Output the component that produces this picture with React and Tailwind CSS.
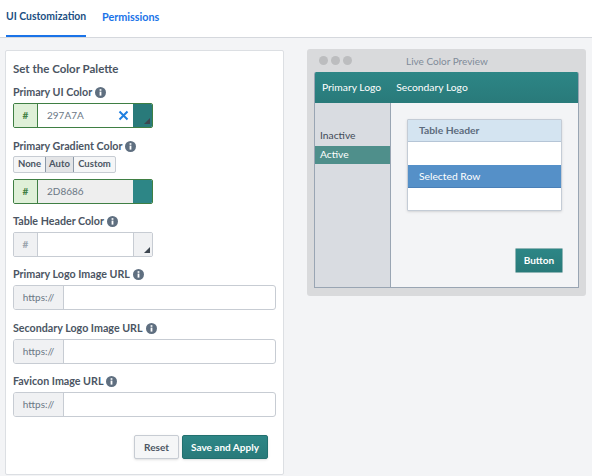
const Info = () => (
  <svg width="11" height="11" viewBox="0 0 11 11" className="shrink-0">
    <circle cx="5.5" cy="5.5" r="5.5" fill="#5f6f80" />
    <rect x="4.6" y="4.6" width="1.8" height="4" fill="#fff" />
    <rect x="4.6" y="2.2" width="1.8" height="1.6" fill="#fff" />
  </svg>
);

const Corner = () => (
  <svg width="6" height="6" viewBox="0 0 6 6" className="absolute right-[2px] bottom-[3px]">
    <path d="M6 0V6H0Z" fill="#3d4650" />
  </svg>
);

const Label = ({ children, className = "" }) => (
  <div className={`flex items-center gap-[3px] h-[14px] text-[10.7px] leading-[14px] font-bold text-[#4b5563] ${className}`}>
    {children}
    <Info />
  </div>
);

const ColorInput = ({ value, green, swatch, disabled, clear, corner, className = "" }) => (
  <div className={`flex w-[140px] h-[25px] rounded-[2px] border overflow-hidden ${green ? "border-[#3f7f43]" : "border-[#c7ccd3]"} ${className}`}>
    <div className={`w-[24px] flex items-center justify-center text-[10px] font-bold border-r ${green ? "bg-[#dff0d8] text-[#3f7f43] border-[#3f7f43]" : "bg-[#f0f1f3] text-[#9aa3ad] border-[#c7ccd3]"}`}>#</div>
    <div className={`flex-1 flex items-center justify-between pl-[9px] pr-[4px] text-[10px] text-[#6b7785] ${disabled ? "bg-[#eeeeee]" : "bg-white"}`}>
      <span>{value}</span>
      {clear && (
        <svg width="11" height="11" viewBox="0 0 11 11">
          <path d="M1.5 1.5L9.5 9.5M9.5 1.5L1.5 9.5" stroke="#1f7fe0" strokeWidth="2" />
        </svg>
      )}
    </div>
    <div className={`relative w-[19px] ${swatch ? "" : "bg-[#f0f1f3] border-l border-[#c7ccd3]"}`} style={swatch ? { background: swatch } : undefined}>
      {corner && <Corner />}
    </div>
  </div>
);

const UrlInput = ({ className = "" }) => (
  <div className={`flex w-[263px] h-[25px] rounded-[3px] border border-[#c7ccd3] overflow-hidden bg-white ${className}`}>
    <div className="w-[50px] flex items-center justify-center text-[10px] text-[#6b7785] bg-[#f0f1f3] border-r border-[#c7ccd3]">https://</div>
    <div className="flex-1" />
  </div>
);

export default function App() {
  return (
    <div className="w-[592px] h-[476px] overflow-hidden bg-[#f3f4f6] font-['Lato','Open_Sans',sans-serif]">
      <div className="h-[38px] bg-white flex pl-[6px] border-b border-[#d5d8dd]">
        <div className="w-[80px] h-[37px] border-b-2 border-[#1a73e8] text-[10.4px] font-bold text-[#1c4f82] pt-[9px] leading-[15px] whitespace-nowrap">UI Customization</div>
        <div className="ml-[16px] text-[10.8px] font-bold text-[#1a73e8] pt-[9px] leading-[15px]">Permissions</div>
      </div>
      <div className="flex items-start pl-[5px] pt-[12px] gap-[23px]">
        <div className="w-[279px] h-[425px] bg-white border border-[#dcdfe3] rounded-[2px] pl-[7px] pt-[11px]">
          <div className="h-[14px] text-[11.5px] leading-[14px] font-bold text-[#4b5563]">Set the Color Palette</div>
          <Label className="mt-[9px]">Primary UI Color</Label>
          <ColorInput className="mt-[4px]" green value="297A7A" clear corner swatch="#297a7a" />
          <Label className="mt-[11px]">Primary Gradient Color</Label>
          <div className="mt-[3px] flex w-[103px] h-[17px] rounded-[2px] border border-[#c7ccd3] text-[9.5px] font-bold text-[#4b5563] bg-[#f5f6f7] overflow-hidden">
            <div className="w-[31px] flex items-center justify-center">None</div>
            <div className="w-[29px] flex items-center justify-center bg-[#e3e4e6] border-x border-[#8c99a8]">Auto</div>
            <div className="flex-1 flex items-center justify-center">Custom</div>
          </div>
          <ColorInput className="mt-[6px]" green disabled value="2D8686" swatch="#2d8686" />
          <Label className="mt-[10px]">Table Header Color</Label>
          <ColorInput className="mt-[4px]" value="" corner />
          <Label className="mt-[10px]">Primary Logo Image URL</Label>
          <UrlInput className="mt-[4px]" />
          <Label className="mt-[11px]">Secondary Logo Image URL</Label>
          <UrlInput className="mt-[4px]" />
          <Label className="mt-[10px]">Favicon Image URL</Label>
          <UrlInput className="mt-[4px]" />
          <div className="mt-[18px] flex justify-end gap-[3px] w-[255px]">
            <div className="w-[45px] h-[24px] flex items-center justify-center rounded-[2px] border border-[#c7ccd3] bg-[#f5f6f7] shadow-sm text-[10px] font-bold text-[#4b5563]">Reset</div>
            <div className="w-[86px] h-[24px] flex items-center justify-center rounded-[2px] border border-[#22706f] bg-gradient-to-b from-[#2d8686] to-[#297a7a] shadow-sm text-[10px] font-bold text-white">Save and Apply</div>
          </div>
        </div>
        <div className="w-[279px] h-[247px] -mt-[1px] bg-[#d9dadc] rounded-[3px] px-[7px] pb-[8px] flex flex-col">
          <div className="h-[23px] relative flex items-center gap-[3px] pl-[5px] pb-[1px]">
            <span className="w-[9px] h-[9px] rounded-full bg-[#bcbdbf]" />
            <span className="w-[9px] h-[9px] rounded-full bg-[#bcbdbf]" />
            <span className="w-[9px] h-[9px] rounded-full bg-[#bcbdbf]" />
            <span className="ml-[51px] mt-[3px] text-[10px] text-[#7f8b99]">Live Color Preview</span>
          </div>
          <div className="flex-1 flex flex-col rounded-t-[2px] overflow-hidden border-x border-b border-[#99a5b3]">
            <div className="h-[31px] flex items-center gap-[15px] pl-[8px] bg-gradient-to-b from-[#2d8686] to-[#297a7a] text-[10.3px] text-white -mx-px">
              <span>Primary Logo</span>
              <span>Secondary Logo</span>
            </div>
            <div className="flex-1 flex">
              <div className="w-[76px] bg-[#d9dce1] border-r border-[#99a5b3] pt-[25px] text-[10.3px]">
                <div className="h-[18px] pl-[5px] leading-[14px] text-[#3f4a57]">Inactive</div>
                <div className="h-[18px] pl-[5px] flex items-center bg-[#4f8f8b] text-white">Active</div>
              </div>
              <div className="flex-1 bg-[#f3f4f6] pl-[16px] pt-[16px] relative">
                <div className="w-[155px] h-[92px] bg-white border border-[#c4ccd6] rounded-[1px] shadow-sm flex flex-col text-[10.3px]">
                  <div className="h-[22px] bg-[#d4e4f1] border-b border-[#b5c5d6] pl-[11px] flex items-center font-bold text-[#5c6b7d]">Table Header</div>
                  <div className="h-[23px]" />
                  <div className="h-[23px] bg-[#5590c8] border-b border-[#4a80b8] pl-[11px] pt-[1px] flex items-center text-white">Selected Row</div>
                </div>
                <div className="absolute right-[15px] bottom-[14px] w-[48px] h-[25px] flex items-center justify-center rounded-[1px] border border-[#8fb5b5] bg-gradient-to-b from-[#2d8686] to-[#297a7a] text-[10px] font-bold text-white">Button</div>
              </div>
            </div>
          </div>
        </div>
      </div>
    </div>
  );
}
